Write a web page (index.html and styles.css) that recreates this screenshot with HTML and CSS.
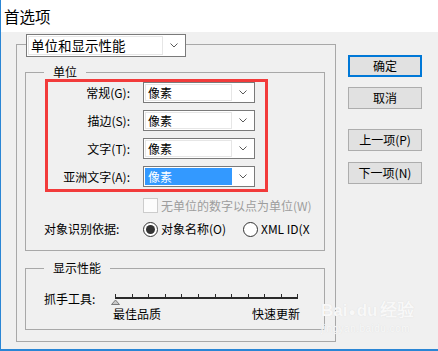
FILE: index.html
```html
<!DOCTYPE html>
<html lang="zh-CN">
<head>
    <meta charset="UTF-8">
    <title>首选项</title>
    <link rel="stylesheet" href="styles.css">
</head>
<body>
    <div class="window">
        <div class="titlebar">首选项</div>

        <div class="content">
            <fieldset class="group outer">
                <legend class="outer-legend">
                    <div class="select wide">
                        <span class="field">单位和显示性能</span>
                        <span class="arrow"><svg width="8" height="5" viewBox="0 0 8 5"><polyline points="0.5,0.5 4,4 7.5,0.5" fill="none" stroke="#5a5a5a" stroke-width="1"/></svg></span>
                    </div>
                </legend>

                <fieldset class="group units">
                    <legend>单位</legend>

                    <!-- red marker box around the unit selects -->
                    <div class="mark">
                        <div class="row">
                            <span class="label">常规(G):</span>
                            <div class="select">
                                <span class="field">像素</span>
                                <span class="arrow"><svg width="8" height="5" viewBox="0 0 8 5"><polyline points="0.5,0.5 4,4 7.5,0.5" fill="none" stroke="#5a5a5a" stroke-width="1"/></svg></span>
                            </div>
                        </div>
                        <div class="row">
                            <span class="label">描边(S):</span>
                            <div class="select">
                                <span class="field">像素</span>
                                <span class="arrow"><svg width="8" height="5" viewBox="0 0 8 5"><polyline points="0.5,0.5 4,4 7.5,0.5" fill="none" stroke="#5a5a5a" stroke-width="1"/></svg></span>
                            </div>
                        </div>
                        <div class="row">
                            <span class="label">文字(T):</span>
                            <div class="select">
                                <span class="field">像素</span>
                                <span class="arrow"><svg width="8" height="5" viewBox="0 0 8 5"><polyline points="0.5,0.5 4,4 7.5,0.5" fill="none" stroke="#5a5a5a" stroke-width="1"/></svg></span>
                            </div>
                        </div>
                        <div class="row">
                            <span class="label">亚洲文字(A):</span>
                            <div class="select">
                                <span class="field selected">像素</span>
                                <span class="arrow"><svg width="8" height="5" viewBox="0 0 8 5"><polyline points="0.5,0.5 4,4 7.5,0.5" fill="none" stroke="#5a5a5a" stroke-width="1"/></svg></span>
                            </div>
                        </div>
                    </div>

                    <div class="check-row">
                        <span class="checkbox"></span>
                        <span class="disabled">无单位的数字以点为单位(W)</span>
                    </div>

                    <div class="radio-row">
                        <span class="radio-label">对象识别依据:</span>
                        <span class="radio on"></span>
                        <span class="option first">对象名称(O)</span>
                        <span class="radio"></span>
                        <span class="option clip">XML ID(X</span>
                    </div>
                </fieldset>

                <fieldset class="group perf">
                    <legend>显示性能</legend>
                    <div class="slider-row">
                        <span class="slider-label">抓手工具:</span>
                        <div class="slider">
                            <svg class="track" width="187" height="13" viewBox="0 0 187 13">
                                <rect x="2" y="4" width="183" height="2" fill="#2a2a2a"/>
                                <g fill="#2a2a2a">
                                    <rect x="2" y="1" width="1" height="3"/>
                                    <rect x="19" y="1" width="1" height="3"/>
                                    <rect x="35" y="1" width="1" height="3"/>
                                    <rect x="52" y="1" width="1" height="3"/>
                                    <rect x="68" y="1" width="1" height="3"/>
                                    <rect x="85" y="1" width="1" height="3"/>
                                    <rect x="102" y="1" width="1" height="3"/>
                                    <rect x="118" y="1" width="1" height="3"/>
                                    <rect x="135" y="1" width="1" height="3"/>
                                    <rect x="151" y="1" width="1" height="3"/>
                                    <rect x="168" y="1" width="1" height="3"/>
                                    <rect x="184" y="1" width="1" height="3"/>
                                </g>
                                <polygon points="-1.5,11.5 2.5,7 6.5,11.5" fill="#c9c9c9" stroke="#7a7a7a" stroke-width="1"/>
                            </svg>
                            <div class="slider-ends">
                                <span>最佳品质</span>
                                <span>快速更新</span>
                            </div>
                        </div>
                    </div>
                </fieldset>
            </fieldset>

            <div class="buttons">
                <button class="btn default">确定</button>
                <button class="btn">取消</button>
                <button class="btn gap">上一项(P)</button>
                <button class="btn">下一项(N)</button>
            </div>
        </div>

        <div class="watermark">
            <div class="wm-logo">Bai<span class="paw">●</span><span class="du">du</span>经验</div>
            <div class="wm-url">jingyan.baidu.com</div>
        </div>
    </div>
</body>
</html>
```

FILE: styles.css
```css
* {
    box-sizing: border-box;
}
body {
    margin: 0;
    font-family: "Noto Sans CJK SC", "Noto Sans", sans-serif;
    font-size: 12px;
    color: #000;
    background: #fff;
}
.window {
    position: relative;
    width: 438px;
    height: 351px;
    border-left: 1px solid #2a86d5;
    border-bottom: 2px solid #2a86d5;
    background: #f0f0f0;
    overflow: hidden;
}
.titlebar {
    height: 32px;
    background: #fff;
    font-size: 15.5px;
    line-height: 32px;
    padding-left: 3px;
}
.content {
    display: flex;
    align-items: flex-start;
    padding-left: 15px;
}

/* group boxes */
.group {
    margin: 0;
    min-width: 0;
    border: 1px solid #a8a8a8;
}
.group > legend {
    padding: 0 9px;
    line-height: 14px;
}
.outer {
    width: 320px;
    padding: 0 10px 11px 8px;
}
.outer > .outer-legend {
    padding: 2px 0 0;
    margin-left: 1px;
    line-height: normal;
}
.units {
    margin-top: 8px;
    padding: 0 0 13px 18px;
}
.perf {
    margin-top: 10px;
    padding: 0 0 7px 18px;
}

/* dropdowns */
.select {
    display: flex;
    width: 112px;
    height: 21px;
    border: 1px solid #7a7a7a;
    background: #fff;
}
.select.wide {
    width: 160px;
    height: 23px;
    font-size: 13.5px;
}
.field {
    flex: 1;
    margin: 1px 0 1px 1px;
    padding-left: 2px;
    border: 1px solid #e6e6e6;
    line-height: 15px;
    white-space: nowrap;
}
.select.wide .field {
    line-height: 17px;
}
.field.selected {
    background: #3399ff;
    border-color: #3399ff;
    color: #fff;
}
.arrow {
    width: 22px;
    display: flex;
    align-items: center;
    justify-content: center;
}

/* red marker */
.mark {
    width: 223px;
    margin-left: 1px;
    border: 3px solid #f23b3b;
    padding-bottom: 2px;
    display: flex;
    flex-direction: column;
    gap: 7px;
}
.row {
    display: flex;
    align-items: center;
}
.row .label {
    width: 82px;
    margin-right: 13px;
    text-align: right;
    line-height: 16px;
}

.check-row {
    display: flex;
    align-items: center;
    height: 15px;
    margin: 6px 0 0 99px;
}
.checkbox {
    width: 15px;
    height: 15px;
    border: 1px solid #cccccc;
    background: #fcfcfc;
    margin-right: 3px;
}
.disabled {
    color: #9d9d9d;
    line-height: 16px;
}

.radio-row {
    display: flex;
    align-items: center;
    height: 16px;
    margin-top: 8px;
    line-height: 16px;
}
.radio-label {
    width: 99px;
}
.radio {
    width: 15px;
    height: 15px;
    border: 1px solid #333;
    border-radius: 50%;
    background: #fff;
    display: flex;
    align-items: center;
    justify-content: center;
    margin-right: 3px;
}
.radio.on::after {
    content: "";
    width: 9px;
    height: 9px;
    border-radius: 50%;
    background: #333;
}
.option.first {
    width: 82px;
}
.option.clip {
    width: 53px;
    overflow: hidden;
    white-space: nowrap;
}

/* slider */
.slider-row {
    display: flex;
    align-items: flex-start;
    margin-top: 16px;
    line-height: 16px;
}
.slider-label {
    width: 69px;
}
.slider {
    width: 187px;
    margin-top: 2px;
}
.track {
    display: block;
    overflow: visible;
}
.slider-ends {
    display: flex;
    justify-content: space-between;
    line-height: 16px;
}

/* buttons */
.buttons {
    display: flex;
    flex-direction: column;
    margin-left: 12px;
    padding-top: 23px;
}
.btn {
    width: 74px;
    height: 22px;
    margin: 0 0 10px;
    padding: 0;
    font-family: inherit;
    font-size: 12px;
    line-height: 18px;
    color: #000;
    background: #e1e1e1;
    border: 1px solid #adadad;
}
.btn.default {
    border: 2px solid #0078d7;
}
.btn.gap {
    margin-top: 10px;
    margin-bottom: 11px;
}

/* faint site watermark in the corner */
.watermark {
    position: absolute;
    left: 320px;
    top: 300px;
    color: #f8f8f8;
    text-shadow: 0 0 1px #dadada;
    font-family: "Liberation Sans", sans-serif;
}
.wm-logo {
    font-size: 17px;
    font-weight: bold;
    line-height: 22px;
}
.paw {
    font-size: 12px;
    margin: 0 1px;
}
.du {
    margin-right: 2px;
}
.wm-url {
    font-size: 10px;
    line-height: 12px;
    letter-spacing: 0.5px;
}
```
